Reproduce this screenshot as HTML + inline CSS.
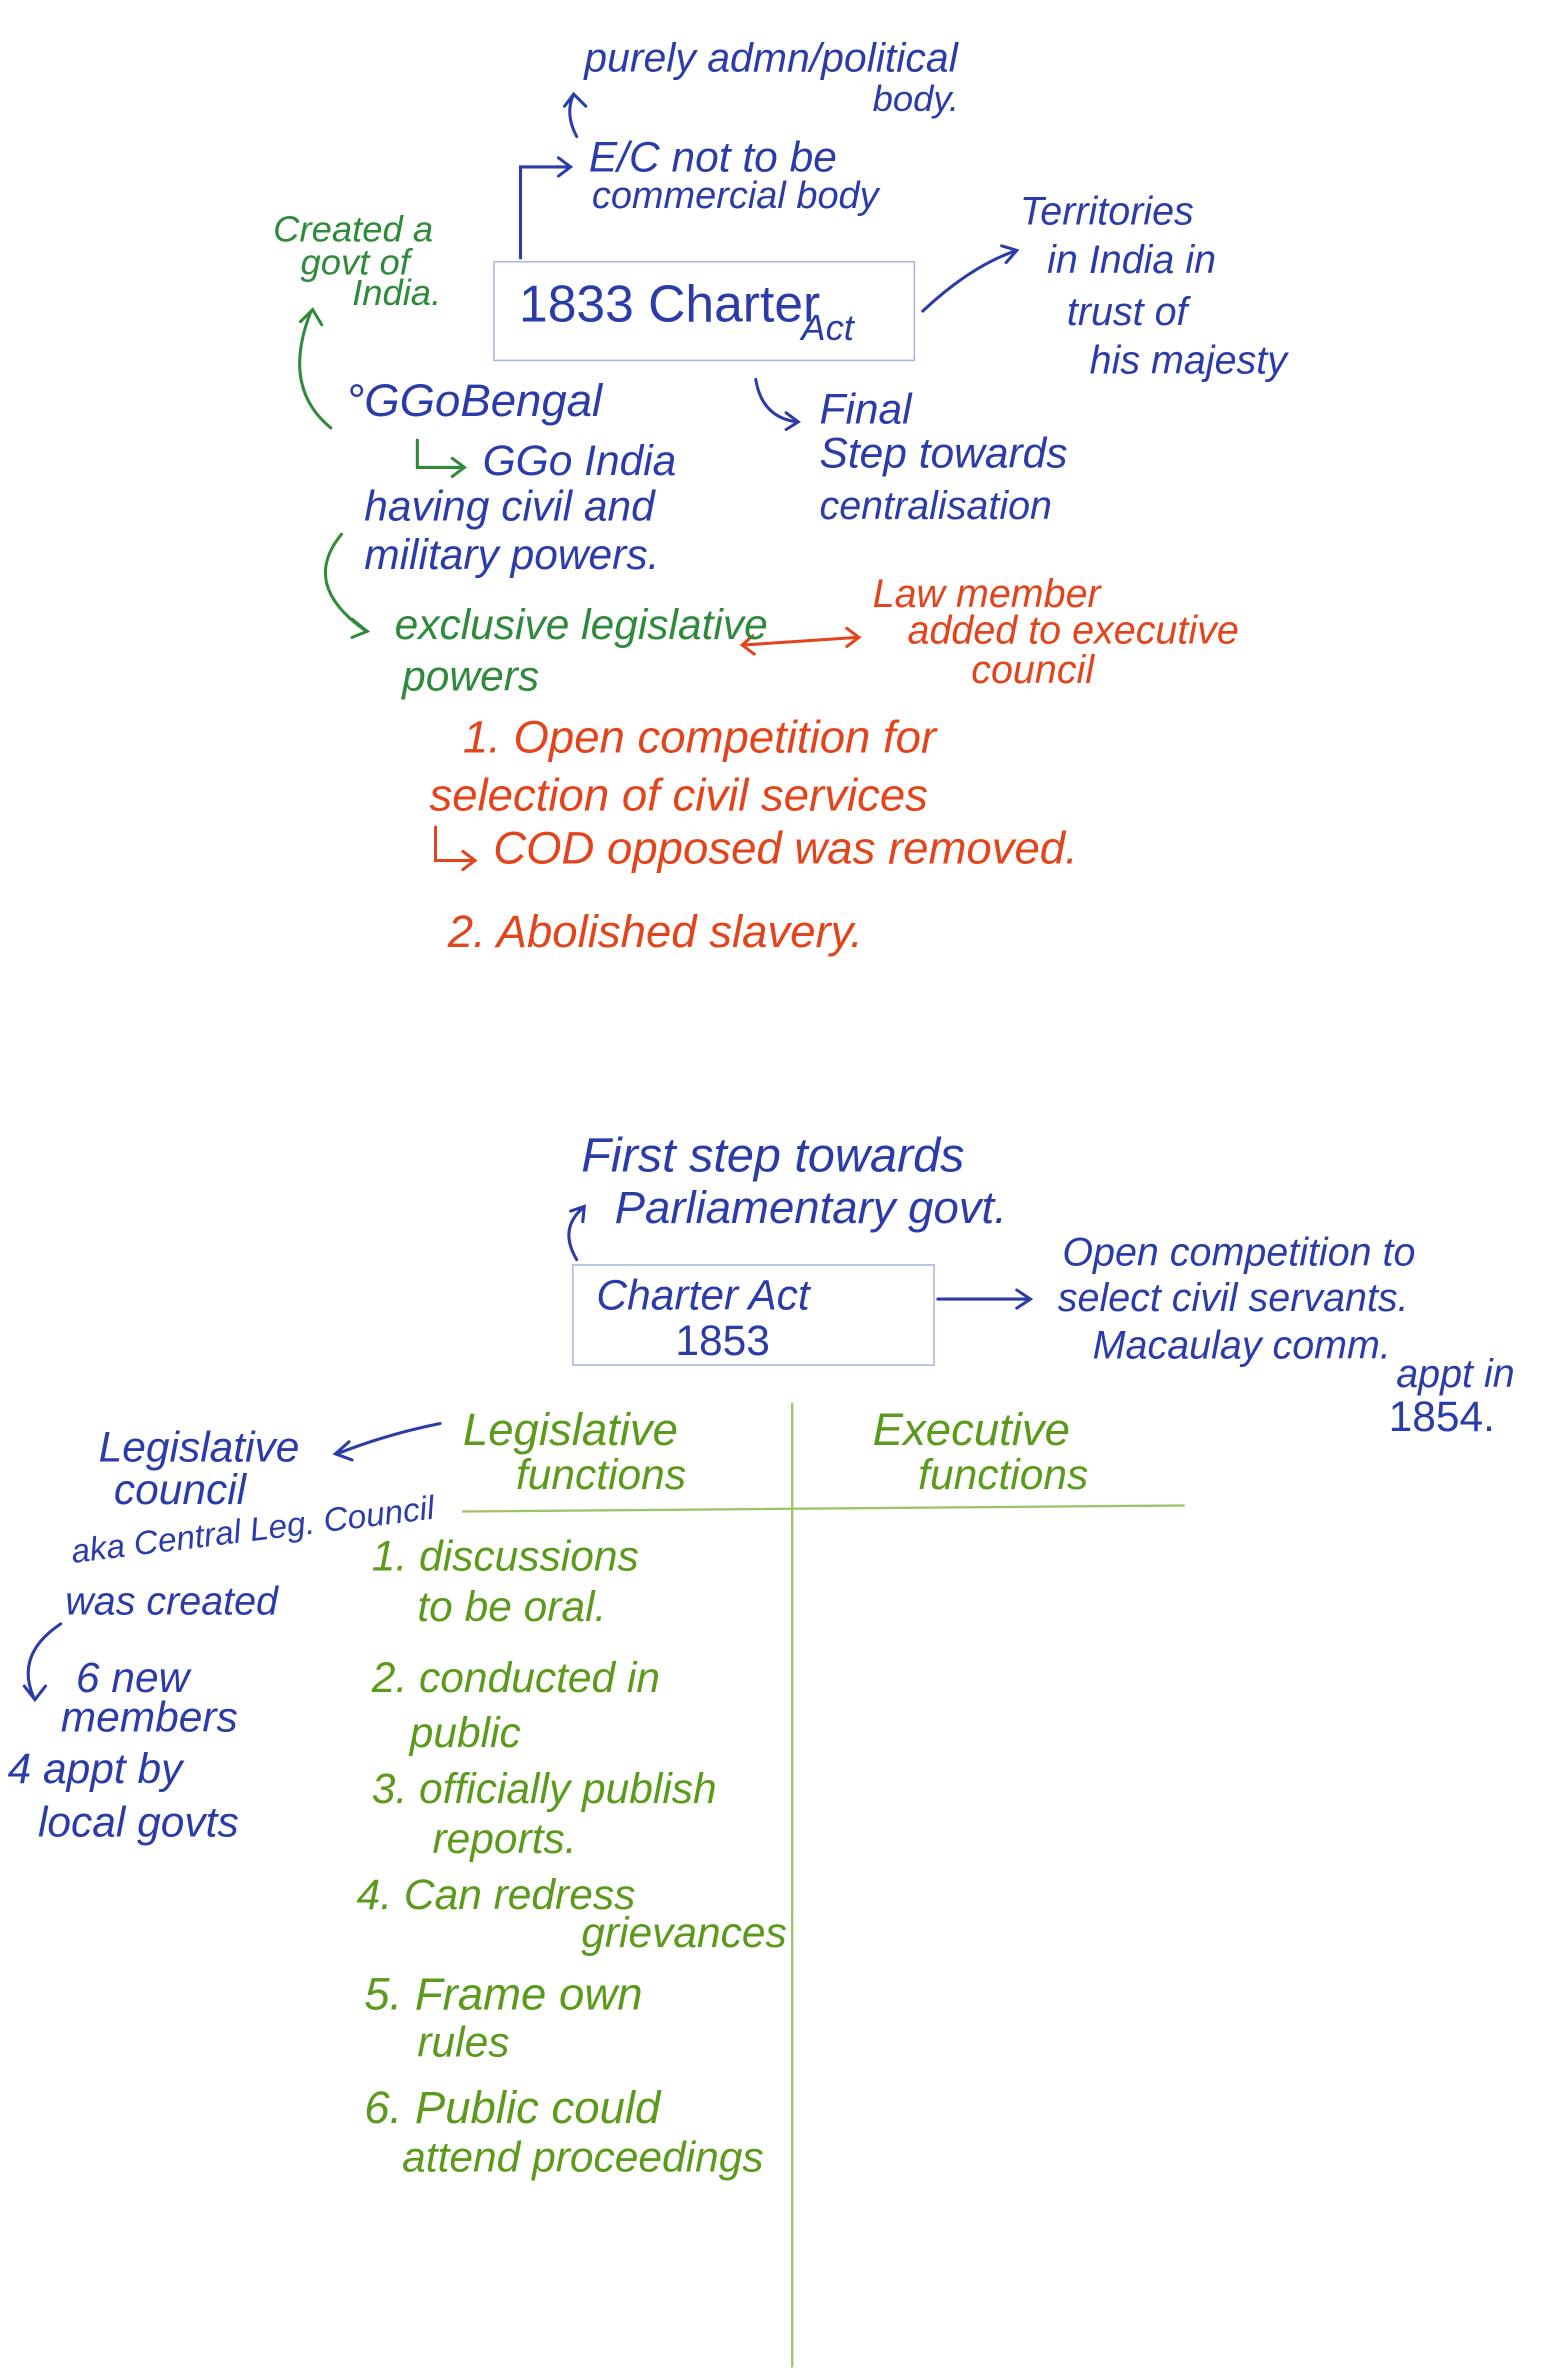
<!DOCTYPE html>
<html><head><meta charset="utf-8"><style>
html,body{margin:0;padding:0;background:#fff;}
body{width:1554px;height:2368px;overflow:hidden;position:relative;}
#c{position:absolute;left:0;top:0;width:1024px;height:1560px;transform:scale(1.5176);transform-origin:0 0;font-family:"Liberation Sans",sans-serif;font-style:italic;}
.t{position:absolute;white-space:nowrap;line-height:1;}
.b{color:#2b3ca8;}.g{color:#2f8a3c;}.o{color:#e2441c;}.l{color:#5c9a1c;}
.box{position:absolute;border:1.5px solid #a9b5da;}
svg{position:absolute;left:0;top:0;}
</style></head><body><div id="c">
<svg width="1024" height="1560" fill="none" stroke-width="2" stroke-linecap="round">
<g stroke="#2b3ca8">
<path d="M380 90 Q372 75 378 62 M372 70 L378 62 L386 70"/>
<path d="M343 170 L343 110 L375 110 M368 104 L376 110 L368 116"/>
<path d="M608 205 Q640 175 670 165 M660 162 L670 165 L663 173"/>
<path d="M498 250 Q502 275 525 278 M518 272 L526 278 L518 283"/>
<path d="M380 830 Q368 810 384 796 M376 798 L385 795 L384 805"/>
<path d="M618 856 L678 856 M670 850 L679 856 L670 862"/>
<path d="M290 938 Q255 945 222 958 M230 950 L221 958 L232 962"/>
<path d="M40 1070 Q10 1090 22 1118 M16 1111 L23 1120 L30 1111"/>
</g>
<g stroke="#2f8a3c">
<path d="M218 282 Q185 255 205 205 M198 212 L206 204 L212 214"/>
<path d="M225 352 Q198 385 240 415 M232 408 L242 416 L232 420"/>
<path d="M275 290 L275 308 L305 308 M298 302 L306 308 L298 314"/>
</g>
<g stroke="#e2441c">
<path d="M490 425 L565 420 M558 414 L566 420 L558 426 M496 419 L489 425 L497 431"/>
<path d="M287 545 L287 567 L312 567 M305 561 L313 567 L305 573"/>
</g>
<g stroke="#9cc26a" stroke-width="1.5">
<path d="M522 925 L522 1560"/>
<path d="M305 996 L780 992"/>
</g>
</svg>
<div class="box" style="left:325px;top:172px;width:276px;height:64px"></div>
<div class="box" style="left:377px;top:833px;width:237px;height:65px"></div>

<div class="t b" style="left:385px;top:25px;font-size:27px">purely admn/political</div>
<div class="t b" style="left:575px;top:54px;font-size:24px">body.</div>
<div class="t b" style="left:388px;top:90px;font-size:28px">E/C not to be</div>
<div class="t b" style="left:390px;top:117px;font-size:25px">commercial body</div>
<div class="t b" style="left:342px;top:184px;font-size:34px;font-style:normal">1833 Charter</div>
<div class="t b" style="left:528px;top:205px;font-size:24px">Act</div>
<div class="t g" style="left:180px;top:140px;font-size:24px">Created a</div>
<div class="t g" style="left:198px;top:162px;font-size:24px">govt of</div>
<div class="t g" style="left:232px;top:182px;font-size:24px">India.</div>
<div class="t b" style="left:672px;top:126px;font-size:26px">Territories</div>
<div class="t b" style="left:690px;top:158px;font-size:26px">in India in</div>
<div class="t b" style="left:703px;top:192px;font-size:26px">trust of</div>
<div class="t b" style="left:718px;top:224px;font-size:26px">his majesty</div>
<div class="t b" style="left:228px;top:250px;font-size:30px">°GGoBengal</div>
<div class="t b" style="left:318px;top:290px;font-size:28px">GGo India</div>
<div class="t b" style="left:240px;top:320px;font-size:28px">having civil and</div>
<div class="t b" style="left:240px;top:352px;font-size:28px">military powers.</div>
<div class="t b" style="left:540px;top:256px;font-size:28px">Final</div>
<div class="t b" style="left:540px;top:285px;font-size:28px">Step towards</div>
<div class="t b" style="left:540px;top:320px;font-size:26px">centralisation</div>
<div class="t g" style="left:260px;top:398px;font-size:28px">exclusive legislative</div>
<div class="t g" style="left:265px;top:432px;font-size:28px">powers</div>
<div class="t o" style="left:575px;top:378px;font-size:26px">Law member</div>
<div class="t o" style="left:598px;top:402px;font-size:26px">added to executive</div>
<div class="t o" style="left:640px;top:428px;font-size:26px">council</div>
<div class="t o" style="left:305px;top:472px;font-size:30px">1. Open competition for</div>
<div class="t o" style="left:283px;top:510px;font-size:30px">selection of civil services</div>
<div class="t o" style="left:325px;top:545px;font-size:30px">COD opposed was removed.</div>
<div class="t o" style="left:295px;top:600px;font-size:30px">2. Abolished slavery.</div>

<div class="t b" style="left:383px;top:745px;font-size:32px">First step towards</div>
<div class="t b" style="left:405px;top:782px;font-size:30px">Parliamentary govt.</div>
<div class="t b" style="left:393px;top:840px;font-size:28px">Charter Act</div>
<div class="t b" style="left:445px;top:870px;font-size:28px;font-style:normal">1853</div>
<div class="t b" style="left:700px;top:812px;font-size:26px">Open competition to</div>
<div class="t b" style="left:697px;top:842px;font-size:26px">select civil servants.</div>
<div class="t b" style="left:720px;top:873px;font-size:26px">Macaulay comm.</div>
<div class="t b" style="left:920px;top:892px;font-size:26px">appt in</div>
<div class="t b" style="left:915px;top:920px;font-size:28px;font-style:normal">1854.</div>

<div class="t l" style="left:305px;top:928px;font-size:30px">Legislative</div>
<div class="t l" style="left:340px;top:958px;font-size:28px">functions</div>
<div class="t l" style="left:575px;top:928px;font-size:30px">Executive</div>
<div class="t l" style="left:605px;top:958px;font-size:28px">functions</div>

<div class="t b" style="left:65px;top:940px;font-size:28px">Legislative</div>
<div class="t b" style="left:75px;top:968px;font-size:28px">council</div>
<div class="t b" style="left:47px;top:1012px;font-size:22px;transform:rotate(-7deg);transform-origin:0 50%">aka Central Leg. Council</div>
<div class="t b" style="left:43px;top:1042px;font-size:26px">was created</div>
<div class="t b" style="left:50px;top:1092px;font-size:28px">6 new</div>
<div class="t b" style="left:40px;top:1118px;font-size:28px">members</div>
<div class="t b" style="left:5px;top:1152px;font-size:28px">4 appt by</div>
<div class="t b" style="left:25px;top:1187px;font-size:28px">local govts</div>

<div class="t l" style="left:245px;top:1012px;font-size:28px">1. discussions</div>
<div class="t l" style="left:275px;top:1045px;font-size:28px">to be oral.</div>
<div class="t l" style="left:245px;top:1092px;font-size:28px">2. conducted in</div>
<div class="t l" style="left:270px;top:1128px;font-size:28px">public</div>
<div class="t l" style="left:245px;top:1165px;font-size:28px">3. officially publish</div>
<div class="t l" style="left:285px;top:1198px;font-size:28px">reports.</div>
<div class="t l" style="left:235px;top:1235px;font-size:28px">4. Can redress</div>
<div class="t l" style="left:383px;top:1260px;font-size:28px">grievances</div>
<div class="t l" style="left:240px;top:1300px;font-size:30px">5. Frame own</div>
<div class="t l" style="left:275px;top:1332px;font-size:28px">rules</div>
<div class="t l" style="left:240px;top:1375px;font-size:30px">6. Public could</div>
<div class="t l" style="left:265px;top:1408px;font-size:28px">attend proceedings</div>
</div></body></html>
